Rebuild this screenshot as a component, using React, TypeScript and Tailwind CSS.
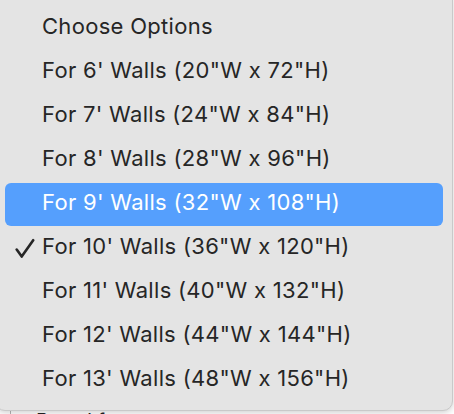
import React from 'react';

const options = [
  'Choose Options',
  'For 6\' Walls (20"W x 72"H)',
  'For 7\' Walls (24"W x 84"H)',
  'For 8\' Walls (28"W x 96"H)',
  'For 9\' Walls (32"W x 108"H)',
  'For 10\' Walls (36"W x 120"H)',
  'For 11\' Walls (40"W x 132"H)',
  'For 12\' Walls (44"W x 144"H)',
  'For 13\' Walls (48"W x 156"H)',
];

const highlighted = 4;
const checked = 5;

const Check = () => (
  <svg className="absolute left-[18px] top-[11px] w-[21px] h-[21px]" viewBox="0 0 21 21" fill="none">
    <path d="M2.7 11.5 L7.7 18.6 L19.2 2.2" stroke="#262626" strokeWidth="2.6" strokeLinecap="round" strokeLinejoin="round" />
  </svg>
);

const App: React.FC = () => {
  return (
    <div className="relative w-[454px] h-[414px] overflow-hidden bg-white font-['Inter',sans-serif]">
      {/* page under the popup */}
      <div className="absolute left-[10px] top-[411px] w-px h-[10px] bg-[#b5b5b5]" />
      <div className="absolute left-[36px] top-[409px] text-[20px] leading-[24px] text-[#222]">Board foot</div>

      {/* popup menu */}
      <div className="absolute left-[-5px] top-[-10px] w-[458px] pt-[16px] pb-[7px] rounded-[10px] bg-[#e4e4e4] border border-[#c9c9c9] shadow-[0_2px_6px_rgba(0,0,0,0.18)]">
        {options.map((label, i) => (
          <div key={label} className="relative h-[44px] px-[9px]">
            <div
              className={`h-[43px] rounded-[6px] flex items-center pl-[37px] pb-[4px] text-[22px] tracking-[0.3px] ${
                i === highlighted ? 'bg-[#559ffd] text-white' : 'text-[#262626]'
              }`}
            >
              {label}
            </div>
            {i === checked && <Check />}
          </div>
        ))}
      </div>
    </div>
  );
};

export default App;
